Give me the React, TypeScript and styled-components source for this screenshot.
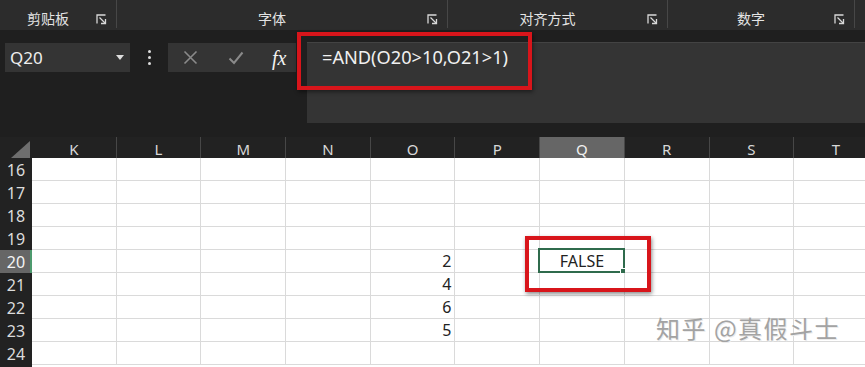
import React from "react";
import styled, { createGlobalStyle } from "styled-components";

const Global = createGlobalStyle`
  html, body { margin: 0; padding: 0; background: #222; }
  body { font-family: "Noto Sans", "Noto Sans CJK SC", sans-serif; }
`;

const COLS = ["K", "L", "M", "N", "O", "P", "Q", "R", "S", "T"];
const ROWS = [16, 17, 18, 19, 20, 21, 22, 23, 24];
const DATA: Record<string, string> = { "O20": "2", "O21": "4", "O22": "6", "O23": "5" };
const GRID = "32px repeat(10, 84.7px)";

const Page = styled.div`
  position: relative;
  width: 865px;
  height: 367px;
  overflow: hidden;
  background: #222;
`;

const Ribbon = styled.div`
  display: flex;
  height: 30px;
  background: #2c2c2c;
`;

const Group = styled.div<{ $w: number; $last?: boolean }>`
  width: ${(p) => p.$w}px;
  flex: ${(p) => (p.$last ? 1 : "none")};
  display: flex;
  align-items: flex-end;
  padding-bottom: 0px;
  box-sizing: border-box;
  border-right: ${(p) => (p.$last ? "none" : "1px solid #474747")};
  margin-bottom: 2px;
`;

const GroupLabel = styled.span`
  flex: 1;
  text-align: center;
  font-size: 14px;
  line-height: 20px;
  color: #e4e4e4;
  transform: translateY(1px);
`;

const Launcher = styled.span`
  width: 20px;
  height: 20px;
  display: flex;
  align-items: center;
  justify-content: flex-start;
  transform: translateY(1px);
  svg { display: block; }
`;

const FormulaArea = styled.div`
  position: relative;
  display: flex;
  align-items: flex-start;
  height: 107px;
  padding-top: 12px;
  box-sizing: border-box;
  background: #1f1f1f;
`;

const NameBox = styled.div`
  margin: 1px 0 0 5px;
  width: 125px;
  height: 29px;
  box-sizing: border-box;
  padding: 0 6px 0 5px;
  display: flex;
  align-items: center;
  justify-content: space-between;
  background: #343434;
  color: #eee;
  font-size: 17px;
`;

const Caret = styled.span`
  width: 0;
  height: 0;
  border-left: 4px solid transparent;
  border-right: 4px solid transparent;
  border-top: 5px solid #ddd;
`;

const Dots = styled.div`
  width: 38px;
  height: 29px;
  margin-top: 1px;
  display: flex;
  flex-direction: column;
  align-items: center;
  justify-content: center;
  gap: 3px;
  span {
    width: 3px;
    height: 3px;
    border-radius: 50%;
    background: #ddd;
  }
`;

const FxPanel = styled.div`
  width: 128px;
  height: 29px;
  margin-top: 1px;
  background: #343434;
  display: flex;
  align-items: center;
  padding-left: 15px;
  box-sizing: border-box;
`;

const FxButton = styled.span<{ $w: number }>`
  width: ${(p) => p.$w}px;
  display: flex;
  align-items: center;
`;

const Fx = styled.span`
  font-family: "Liberation Serif", serif;
  font-style: italic;
  font-size: 20px;
  color: #f2f2f2;
  line-height: 1;
`;

const FormulaInput = styled.div`
  margin-left: 11px;
  flex: 1;
  height: 81px;
  background: #343434;
  border-top: 1px solid #434343;
  box-sizing: border-box;
  padding-left: 15px;
  font-size: 18.2px;
  line-height: 28px;
  color: #f0f0f0;
`;

const RedBox = styled.div<{ $x: number; $y: number; $w: number; $h: number }>`
  position: absolute;
  left: ${(p) => p.$x}px;
  top: ${(p) => p.$y}px;
  width: ${(p) => p.$w}px;
  height: ${(p) => p.$h}px;
  box-sizing: border-box;
  border: 4px solid #d8151b;
  box-shadow: 1px 2px 4px rgba(0, 0, 0, 0.45);
  pointer-events: none;
`;

const ColHeaderRow = styled.div`
  display: grid;
  grid-template-columns: ${GRID};
  height: 21px;
  background: #222;
`;

const Corner = styled.div`
  position: relative;
  &::after {
    content: "";
    position: absolute;
    right: 2px;
    bottom: 2px;
    width: 0;
    height: 0;
    border-left: 19px solid transparent;
    border-bottom: 17px solid #6e6e6e;
  }
`;

const ColHead = styled.div<{ $sel?: boolean }>`
  display: flex;
  align-items: center;
  justify-content: center;
  font-size: 15px;
  color: ${(p) => (p.$sel ? "#f0f0f0" : "#d8d8d8")};
  background: ${(p) => (p.$sel ? "#666" : "transparent")};
  border-right: 1px solid #474747;
  border-bottom: ${(p) => (p.$sel ? "1px solid #4d9a6e" : "1px solid transparent")};
  box-sizing: border-box;
  padding-top: 2px;
`;

const Row = styled.div`
  display: grid;
  grid-template-columns: ${GRID};
  height: 23px;
`;

const RowHead = styled.div<{ $sel?: boolean }>`
  display: flex;
  align-items: center;
  justify-content: center;
  font-size: 16px;
  color: ${(p) => (p.$sel ? "#f4f4f4" : "#dcdcdc")};
  background: ${(p) => (p.$sel ? "#666" : "#222")};
  border-right: ${(p) => (p.$sel ? "2px solid #4d9a6e" : "2px solid #222")};
  box-sizing: border-box;
  padding-left: 2px;
`;

const Cell = styled.div<{ $align?: "right" | "center" }>`
  position: relative;
  background: #fff;
  border-right: 1px solid #dadada;
  border-bottom: 1px solid #dadada;
  box-sizing: border-box;
  display: flex;
  align-items: center;
  justify-content: ${(p) => (p.$align === "right" ? "flex-end" : "center")};
  padding: 0 3px 0 3px;
  font-size: 16px;
  color: #222;
`;

const Selection = styled.div`
  position: absolute;
  left: -2px;
  top: -2px;
  right: -1px;
  bottom: -1px;
  border: 2px solid #2f6b4c;
  pointer-events: none;
  &::after {
    content: "";
    position: absolute;
    right: -4px;
    bottom: -4px;
    width: 5px;
    height: 5px;
    background: #2f6b4c;
    border: 1px solid #fff;
  }
`;

const Tail = styled.div`
  display: grid;
  grid-template-columns: ${GRID};
  height: 2px;
  background: #fff;
  > div:first-child { background: #222; }
`;

const Watermark = styled.div`
  position: absolute;
  left: 656px;
  top: 310px;
  font-size: 24px;
  letter-spacing: 1.5px;
  color: #a3a3a3;
  text-shadow: 1px 1px 0 #ececec;
  font-family: "Noto Sans CJK SC", "Noto Sans", sans-serif;
  pointer-events: none;
`;

const LauncherIcon = () => (
  <svg width="11" height="11" viewBox="0 0 11 11" fill="none" stroke="#d8d8d8" strokeWidth="1.3">
    <path d="M1 9.5V1H9.5" />
    <path d="M3.5 3.5L9 9" />
    <path d="M9.5 5V9.5H5" />
  </svg>
);

const groups = [
  { label: "剪贴板", w: 117 },
  { label: "字体", w: 331 },
  { label: "对齐方式", w: 220 },
  { label: "数字", w: 187 },
];

export default function App() {
  return (
    <Page>
      <Global />
      <Ribbon>
        {groups.map((g) => (
          <Group key={g.label} $w={g.w}>
            <GroupLabel>{g.label}</GroupLabel>
            <Launcher>
              <LauncherIcon />
            </Launcher>
          </Group>
        ))}
        <Group $w={10} $last />
      </Ribbon>
      <FormulaArea>
        <NameBox>
          <span>Q20</span>
          <Caret />
        </NameBox>
        <Dots>
          <span />
          <span />
          <span />
        </Dots>
        <FxPanel>
          <FxButton $w={45}>
            <svg width="15" height="15" viewBox="0 0 15 15" stroke="#8a8a8a" strokeWidth="1.6">
              <path d="M1.5 1.5L13.5 13.5M13.5 1.5L1.5 13.5" />
            </svg>
          </FxButton>
          <FxButton $w={44}>
            <svg width="16" height="14" viewBox="0 0 16 14" fill="none" stroke="#8a8a8a" strokeWidth="2">
              <path d="M1.5 7.5L6 12L14.5 1.5" />
            </svg>
          </FxButton>
          <FxButton $w={20}>
            <Fx>fx</Fx>
          </FxButton>
        </FxPanel>
        <FormulaInput>=AND(O20&gt;10,O21&gt;1)</FormulaInput>
      </FormulaArea>
      <ColHeaderRow>
        <Corner />
        {COLS.map((c) => (
          <ColHead key={c} $sel={c === "Q"}>
            {c}
          </ColHead>
        ))}
      </ColHeaderRow>
      {ROWS.map((r) => (
        <Row key={r}>
          <RowHead $sel={r === 20}>{r}</RowHead>
          {COLS.map((c) => {
            const id = `${c}${r}`;
            if (id === "Q20") {
              return (
                <Cell key={id}>
                  FALSE
                  <Selection />
                </Cell>
              );
            }
            return (
              <Cell key={id} $align="right">
                {DATA[id] ?? ""}
              </Cell>
            );
          })}
        </Row>
      ))}
      <Tail>
        <div />
      </Tail>
      <RedBox $x={297} $y={32} $w={235} $h={58} />
      <RedBox $x={525} $y={236} $w={126} $h={56} />
      <Watermark>知乎 @真假斗士</Watermark>
    </Page>
  );
}
